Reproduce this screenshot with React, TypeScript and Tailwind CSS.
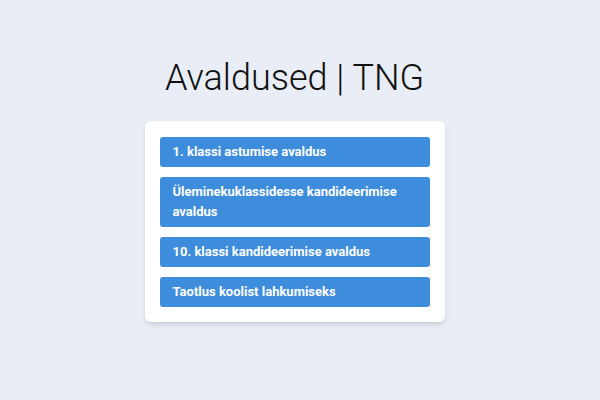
export default function App() {
  const items = [
    "1. klassi astumise avaldus",
    "Üleminekuklassidesse kandideerimise avaldus",
    "10. klassi kandideerimise avaldus",
    "Taotlus koolist lahkumiseks",
  ];

  return (
    <div className="min-h-[400px] w-full bg-[#e9eef6] flex flex-col items-center pt-[58px] pr-[11px] font-['Roboto',sans-serif]">
      <h1 className="text-[36px] leading-[40px] font-light text-[#111]">Avaldused | TNG</h1>
      <div className="mt-[23px] w-[300px] bg-white rounded-md shadow-md p-[15px] pt-4 flex flex-col gap-[10px]">
        {items.map((t) => (
          <a
            key={t}
            href="#"
            className="block bg-[#3d8ddc] text-white rounded-[3px] px-[13px] py-[5px] text-[13px] leading-[20px] font-bold"
          >
            {t}
          </a>
        ))}
      </div>
    </div>
  );
}
